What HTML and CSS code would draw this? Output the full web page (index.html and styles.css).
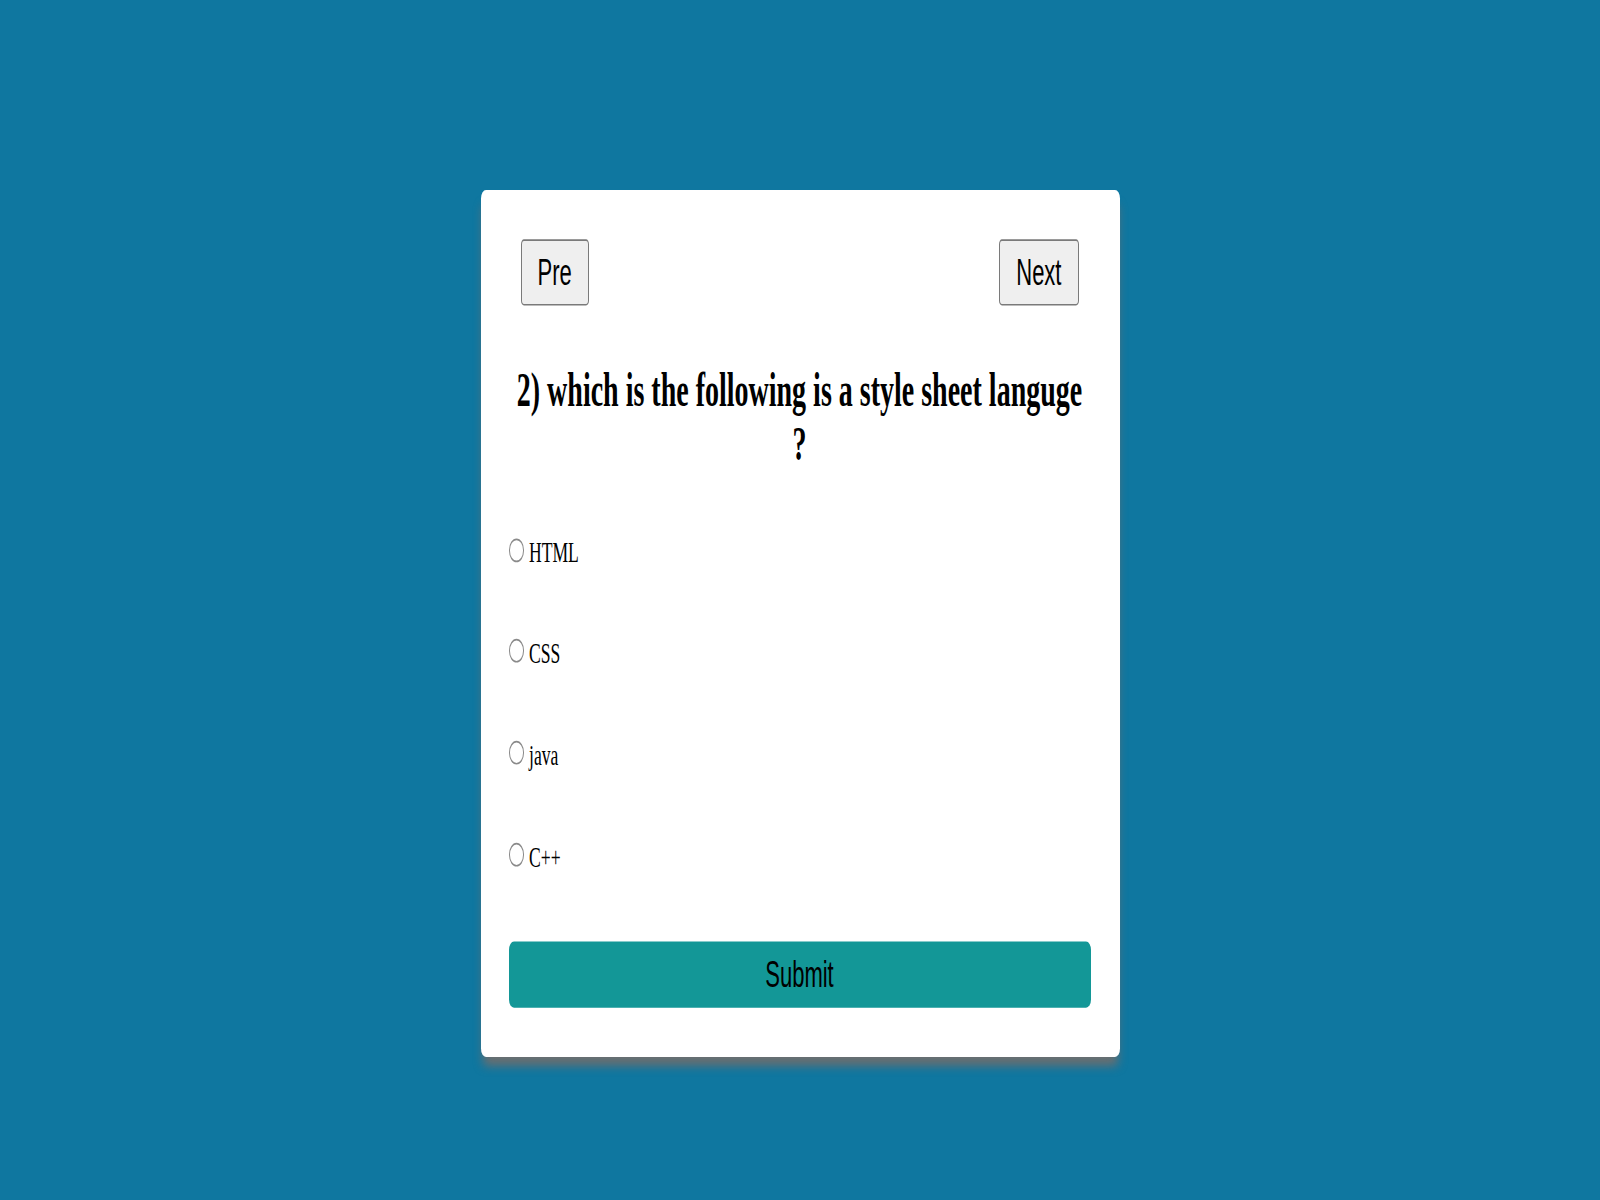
FILE: index.html
```html
<!DOCTYPE html>
<html lang="en">
<head>
<meta charset="utf-8">
<title>Quiz</title>
<link rel="stylesheet" href="styles.css">
</head>
<body>
  <main class="quiz-card">
    <div class="quiz-nav">
      <button class="nav-btn" type="button">Pre</button>
      <button class="nav-btn" type="button">Next</button>
    </div>
    <h2 class="question">2) which is the following is a style sheet languge ?</h2>
    <ul class="options">
      <li class="option"><input class="radio" type="radio" name="answer" id="a1"><label for="a1">HTML</label></li>
      <li class="option"><input class="radio" type="radio" name="answer" id="a2"><label for="a2">CSS</label></li>
      <li class="option"><input class="radio" type="radio" name="answer" id="a3"><label for="a3">java</label></li>
      <li class="option"><input class="radio" type="radio" name="answer" id="a4"><label for="a4">C++</label></li>
    </ul>
    <button class="submit-btn" type="button">Submit</button>
  </main>
</body>
</html>
```
FILE: styles.css
```css
html {
  background: #0f77a0;
}

body {
  margin: 0;
  min-height: 1200px;
  background: #0f77a0;
  overflow: hidden;
}

.quiz-card {
  box-sizing: border-box;
  width: 639px;
  margin: 190px auto 0;
  padding: 29px 29px 29.2px 28px;
  background: #ffffff;
  border-radius: 5px;
  box-shadow: 0 7px 7px -2px rgba(110, 110, 110, 0.95);
  transform: scaleY(1.7);
  transform-origin: top center;
}

.quiz-nav {
  display: flex;
  justify-content: space-between;
  padding: 0 12px;
}

.nav-btn {
  box-sizing: border-box;
  height: 39px;
  padding: 0 16px;
  margin: 0;
  font-family: "Liberation Sans", Arial, sans-serif;
  font-size: 22px;
  line-height: 25px;
  color: #000000;
  background: #efefef;
  border: 1px solid #7a7a7a;
  border-radius: 3px;
}

.question {
  margin: 34px 0 0;
  font-family: "Liberation Serif", "Times New Roman", serif;
  font-weight: bold;
  font-size: 28px;
  line-height: 32px;
  text-align: center;
  color: #000000;
}

.options {
  list-style: none;
  margin: 36.5px 0 0;
  padding: 0;
  display: flex;
  flex-direction: column;
  gap: 39.7px;
}

.option {
  display: flex;
  align-items: center;
  height: 20px;
  font-family: "Liberation Serif", "Times New Roman", serif;
  font-size: 17.6px;
  line-height: 20px;
  color: #000000;
}

.radio {
  appearance: none;
  -webkit-appearance: none;
  box-sizing: border-box;
  width: 15.5px;
  height: 14px;
  margin: -2px 5px 0 0;
  border: 1.2px solid #8a8a8a;
  border-radius: 50%;
  background: #ffffff;
  flex: none;
}

.submit-btn {
  display: block;
  box-sizing: border-box;
  width: 100%;
  height: 39px;
  margin: 40.6px 0 0;
  padding: 0;
  font-family: "Liberation Sans", Arial, sans-serif;
  font-size: 22px;
  line-height: 25px;
  color: #000000;
  background: #139797;
  border: none;
  border-radius: 5px;
}
```
